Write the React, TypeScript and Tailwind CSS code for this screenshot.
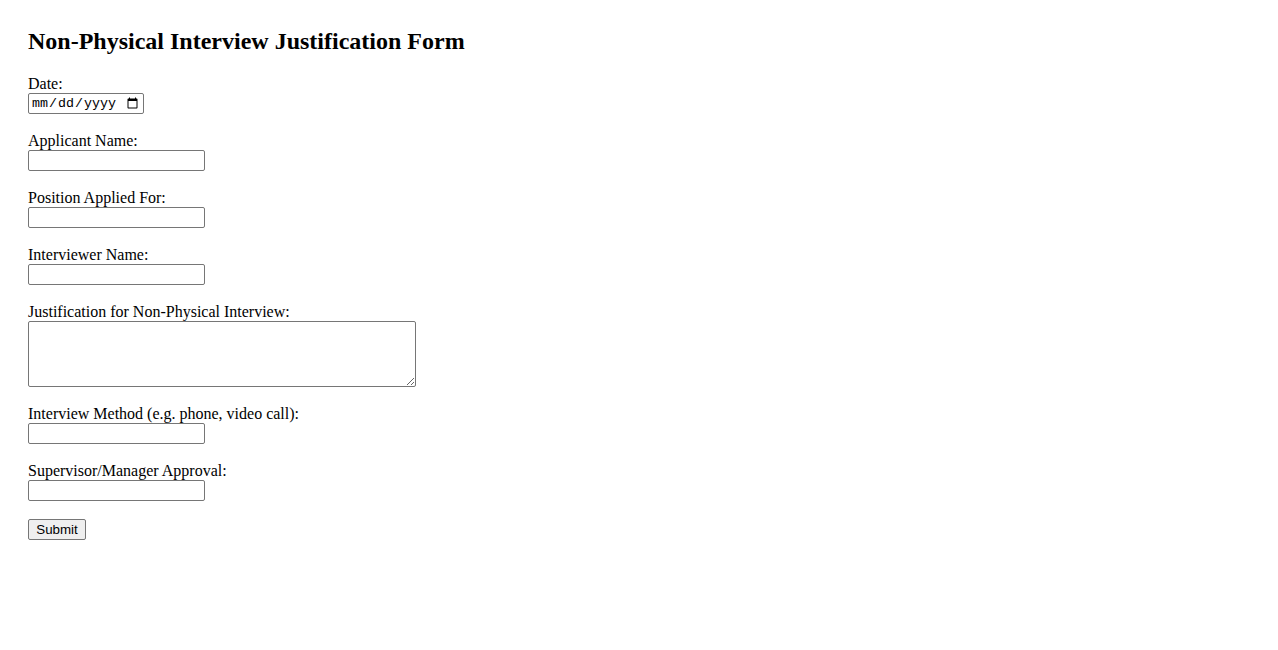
import React from 'react'

const fields = [
    {id: "applicant", label: "Applicant Name:"},
    {id: "position", label: "Position Applied For:"},
    {id: "interviewer", label: "Interviewer Name:"},
]

const inputCls = "block h-[21px] w-[177px] rounded-[2px] border border-[#767676] bg-white px-[2px] py-[1px] text-[13.33px] font-['Liberation_Sans',sans-serif] outline-none"

const App = () => {
    return (
        <div className="min-h-[650px] bg-white px-[28px] pt-[27px] text-black font-['Liberation_Serif',serif]">
            <h2 className="text-[24px] leading-[28px] font-bold mb-[20px]">
                Non-Physical Interview Justification Form
            </h2>
            <form className="flex flex-col">
                <div className="mb-[18px]">
                    <label htmlFor="date" className="block text-[16px] leading-[18px]">Date:</label>
                    <input
                        id="date"
                        type="date"
                        className="block h-[21px] w-[116px] rounded-[2px] border border-[#767676] bg-white px-[2px] py-0 text-[13.33px] font-['Liberation_Mono',monospace] outline-none"
                    />
                </div>
                {fields.map((f) => (
                    <div key={f.id} className="mb-[18px]">
                        <label htmlFor={f.id} className="block text-[16px] leading-[18px]">{f.label}</label>
                        <input id={f.id} type="text" className={inputCls}/>
                    </div>
                ))}
                <div className="mb-[18px]">
                    <label htmlFor="justification" className="block text-[16px] leading-[18px]">
                        Justification for Non-Physical Interview:
                    </label>
                    <textarea
                        id="justification"
                        className="block h-[66px] w-[388px] rounded-[2px] border border-[#767676] bg-white px-[2px] py-[2px] text-[13.33px] font-['Liberation_Mono',monospace] outline-none"
                    />
                </div>
                <div className="mb-[18px]">
                    <label htmlFor="method" className="block text-[16px] leading-[18px]">
                        Interview Method (e.g. phone, video call):
                    </label>
                    <input id="method" type="text" className={inputCls}/>
                </div>
                <div className="mb-[18px]">
                    <label htmlFor="approval" className="block text-[16px] leading-[18px]">
                        Supervisor/Manager Approval:
                    </label>
                    <input id="approval" type="text" className={inputCls}/>
                </div>
                <div>
                    <button
                        type="submit"
                        className="block h-[21px] w-[58px] rounded-[2px] border border-[#767676] bg-[#efefef] px-[6px] py-[1px] text-[13.33px] leading-[16px] text-black font-['Liberation_Sans',sans-serif]"
                    >
                        Submit
                    </button>
                </div>
            </form>
        </div>
    )
}

export default App
